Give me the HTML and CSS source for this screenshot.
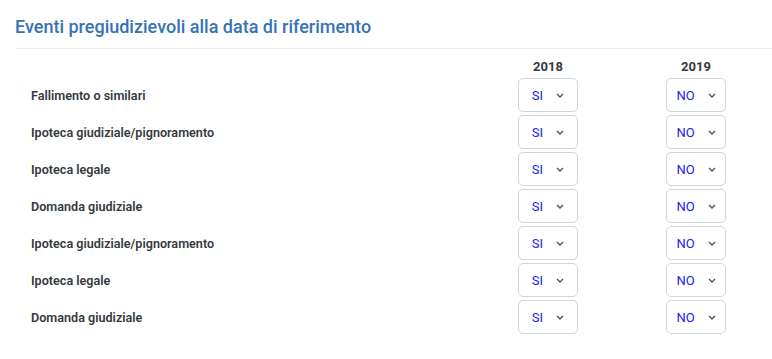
FILE: index.html
```html
<!DOCTYPE html>
<html lang="it">

<head>
  <meta charset="UTF-8">
  <meta name="viewport" content="width=device-width, initial-scale=1.0">
  <title>Eventi pregiudizievoli</title>
  <link rel="stylesheet" href="styles.css">
</head>

<body>
  <div class="sezione">
    <!-- Titolo della sezione -->
    <h2 class="titolo">Eventi pregiudizievoli alla data di riferimento</h2>

    <!-- Tabella degli eventi -->
    <div class="tabella">
      <div class="intestazione"></div>
      <div class="intestazione anno">2018</div>
      <div class="intestazione anno">2019</div>

      <div class="etichetta">Fallimento o similari</div>
      <div class="cella"><div class="scelta">SI <svg viewBox="0 0 8 5"><polyline points="1,1 4,4 7,1" /></svg></div></div>
      <div class="cella"><div class="scelta">NO <svg viewBox="0 0 8 5"><polyline points="1,1 4,4 7,1" /></svg></div></div>

      <div class="etichetta">Ipoteca giudiziale/pignoramento</div>
      <div class="cella"><div class="scelta">SI <svg viewBox="0 0 8 5"><polyline points="1,1 4,4 7,1" /></svg></div></div>
      <div class="cella"><div class="scelta">NO <svg viewBox="0 0 8 5"><polyline points="1,1 4,4 7,1" /></svg></div></div>

      <div class="etichetta">Ipoteca legale</div>
      <div class="cella"><div class="scelta">SI <svg viewBox="0 0 8 5"><polyline points="1,1 4,4 7,1" /></svg></div></div>
      <div class="cella"><div class="scelta">NO <svg viewBox="0 0 8 5"><polyline points="1,1 4,4 7,1" /></svg></div></div>

      <div class="etichetta">Domanda giudiziale</div>
      <div class="cella"><div class="scelta">SI <svg viewBox="0 0 8 5"><polyline points="1,1 4,4 7,1" /></svg></div></div>
      <div class="cella"><div class="scelta">NO <svg viewBox="0 0 8 5"><polyline points="1,1 4,4 7,1" /></svg></div></div>

      <div class="etichetta">Ipoteca giudiziale/pignoramento</div>
      <div class="cella"><div class="scelta">SI <svg viewBox="0 0 8 5"><polyline points="1,1 4,4 7,1" /></svg></div></div>
      <div class="cella"><div class="scelta">NO <svg viewBox="0 0 8 5"><polyline points="1,1 4,4 7,1" /></svg></div></div>

      <div class="etichetta">Ipoteca legale</div>
      <div class="cella"><div class="scelta">SI <svg viewBox="0 0 8 5"><polyline points="1,1 4,4 7,1" /></svg></div></div>
      <div class="cella"><div class="scelta">NO <svg viewBox="0 0 8 5"><polyline points="1,1 4,4 7,1" /></svg></div></div>

      <div class="etichetta">Domanda giudiziale</div>
      <div class="cella"><div class="scelta">SI <svg viewBox="0 0 8 5"><polyline points="1,1 4,4 7,1" /></svg></div></div>
      <div class="cella"><div class="scelta">NO <svg viewBox="0 0 8 5"><polyline points="1,1 4,4 7,1" /></svg></div></div>
    </div>
  </div>
</body>

</html>
```

FILE: styles.css
```css
/* Stili generali */
body {
  margin: 0;
  background-color: #fff;
  font-family: Roboto, "Liberation Sans", Arial, sans-serif;
}

.sezione {
  padding: 16px 0 0 15px;
}

/* Titolo con linea sotto */
.titolo {
  margin: 0;
  padding-bottom: 11px;
  border-bottom: 1px solid #e9eef4;
  font-size: 18px;
  font-weight: 500;
  line-height: 21px;
  color: #3572b6;
}

/* Tabella */
.tabella {
  display: grid;
  grid-template-columns: 1fr 148px 148px;
  row-gap: 3px;
  padding: 0 2px 0 16px;
}

.intestazione {
  margin-top: 10px;
  font-size: 13px;
  font-weight: 700;
  line-height: 16px;
  color: #343a40;
}

.anno {
  text-align: center;
}

.etichetta {
  display: flex;
  align-items: center;
  font-size: 12.6px;
  font-weight: 600;
  color: #343a40;
}

.cella {
  display: flex;
  justify-content: center;
}

/* Finta select */
.scelta {
  display: flex;
  align-items: center;
  justify-content: center;
  gap: 13px;
  box-sizing: border-box;
  width: 60px;
  height: 34px;
  border: 1px solid #cfd6e0;
  border-radius: 5px;
  font-size: 13px;
  color: #2020f5;
}

.scelta svg {
  width: 8px;
  height: 5px;
  fill: none;
  stroke: #495057;
  stroke-width: 1.3;
}
```
